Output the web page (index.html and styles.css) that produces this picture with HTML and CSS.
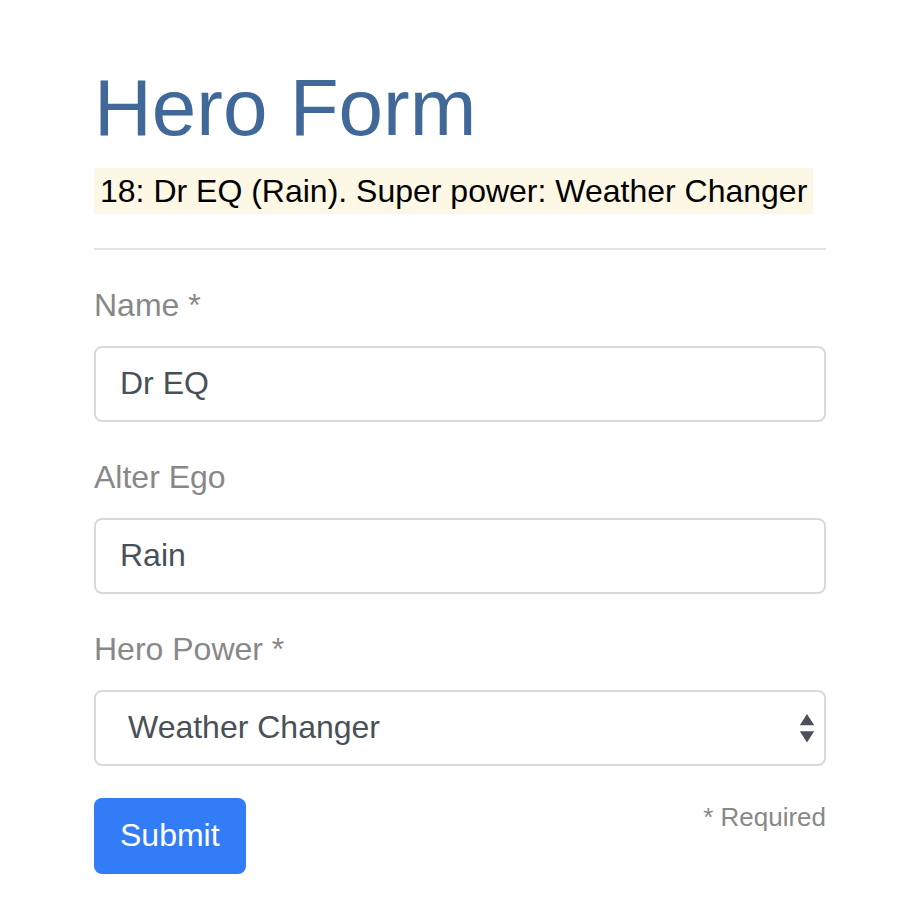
FILE: index.html
```html
<!DOCTYPE html>
<html lang="en">
<head>
<meta charset="utf-8">
<meta name="viewport" content="width=device-width, initial-scale=1">
<title>Hero Form</title>
<link rel="stylesheet" href="styles.css">
</head>
<body>
<main class="page">
  <h1 class="title">Hero Form</h1>
  <p class="summary"><span class="diagnostic">18: Dr EQ (Rain). Super power: Weather Changer</span></p>
  <form class="form">
    <div class="field">
      <label for="name">Name *</label>
      <input class="control" id="name" type="text" value="Dr EQ" required>
    </div>
    <div class="field">
      <label for="alter-ego">Alter Ego</label>
      <input class="control" id="alter-ego" type="text" value="Rain">
    </div>
    <div class="field">
      <label for="power">Hero Power *</label>
      <div class="select-wrap">
        <select class="control select" id="power" required>
          <option>Really Smart</option>
          <option>Super Flexible</option>
          <option selected>Weather Changer</option>
        </select>
        <svg class="arrows" viewBox="0 0 16 28" aria-hidden="true"><path d="M8 0L15.2 11.2H.8zM8 28.4L.8 17.2h14.4z"/></svg>
      </div>
    </div>
    <div class="actions">
      <button class="submit" type="submit">Submit</button>
      <span class="required">* Required</span>
    </div>
  </form>
</main>
</body>
</html>
```
FILE: styles.css
```css
* { box-sizing: border-box; }

body {
  margin: 0;
  background: #fff;
  color: #000;
  font-family: "Liberation Sans", Arial, sans-serif;
  font-size: 32px;
}

.page { padding: 64px 94px 46px; }

.title {
  margin: 0;
  color: #406899;
  font-size: 80px;
  font-weight: 400;
  line-height: 88px;
}

.summary {
  margin: 16px 0 34px;
  line-height: 46px;
}

.diagnostic {
  display: inline-block;
  padding: 0 6px;
  background: #fdf7e5;
}

.form {
  padding-top: 32px;
  border-top: 2px solid #e5e5e5;
}

.field { margin-bottom: 32px; }

.field label {
  display: block;
  margin-bottom: 18px;
  color: #888;
  line-height: 46px;
}

.control {
  display: block;
  width: 100%;
  height: 76px;
  padding: 0 24px 2px;
  border: 2px solid #d9d9d9;
  border-radius: 8px;
  background: #fff;
  color: #495057;
  font: inherit;
}

.select-wrap { position: relative; }

.select {
  padding: 0 32px 2px;
  appearance: none;
}

.arrows {
  position: absolute;
  top: 24px;
  right: 11px;
  width: 16px;
  height: 28px;
  overflow: visible;
  fill: #495057;
  pointer-events: none;
}

.actions {
  display: flex;
  justify-content: space-between;
  align-items: flex-start;
}

.submit {
  height: 76px;
  padding: 0 26px 2px;
  border: 0;
  border-radius: 8px;
  background: #337cf8;
  color: #fff;
  font: inherit;
}

.required {
  color: #888;
  font-size: 26px;
  line-height: 38px;
}
```
